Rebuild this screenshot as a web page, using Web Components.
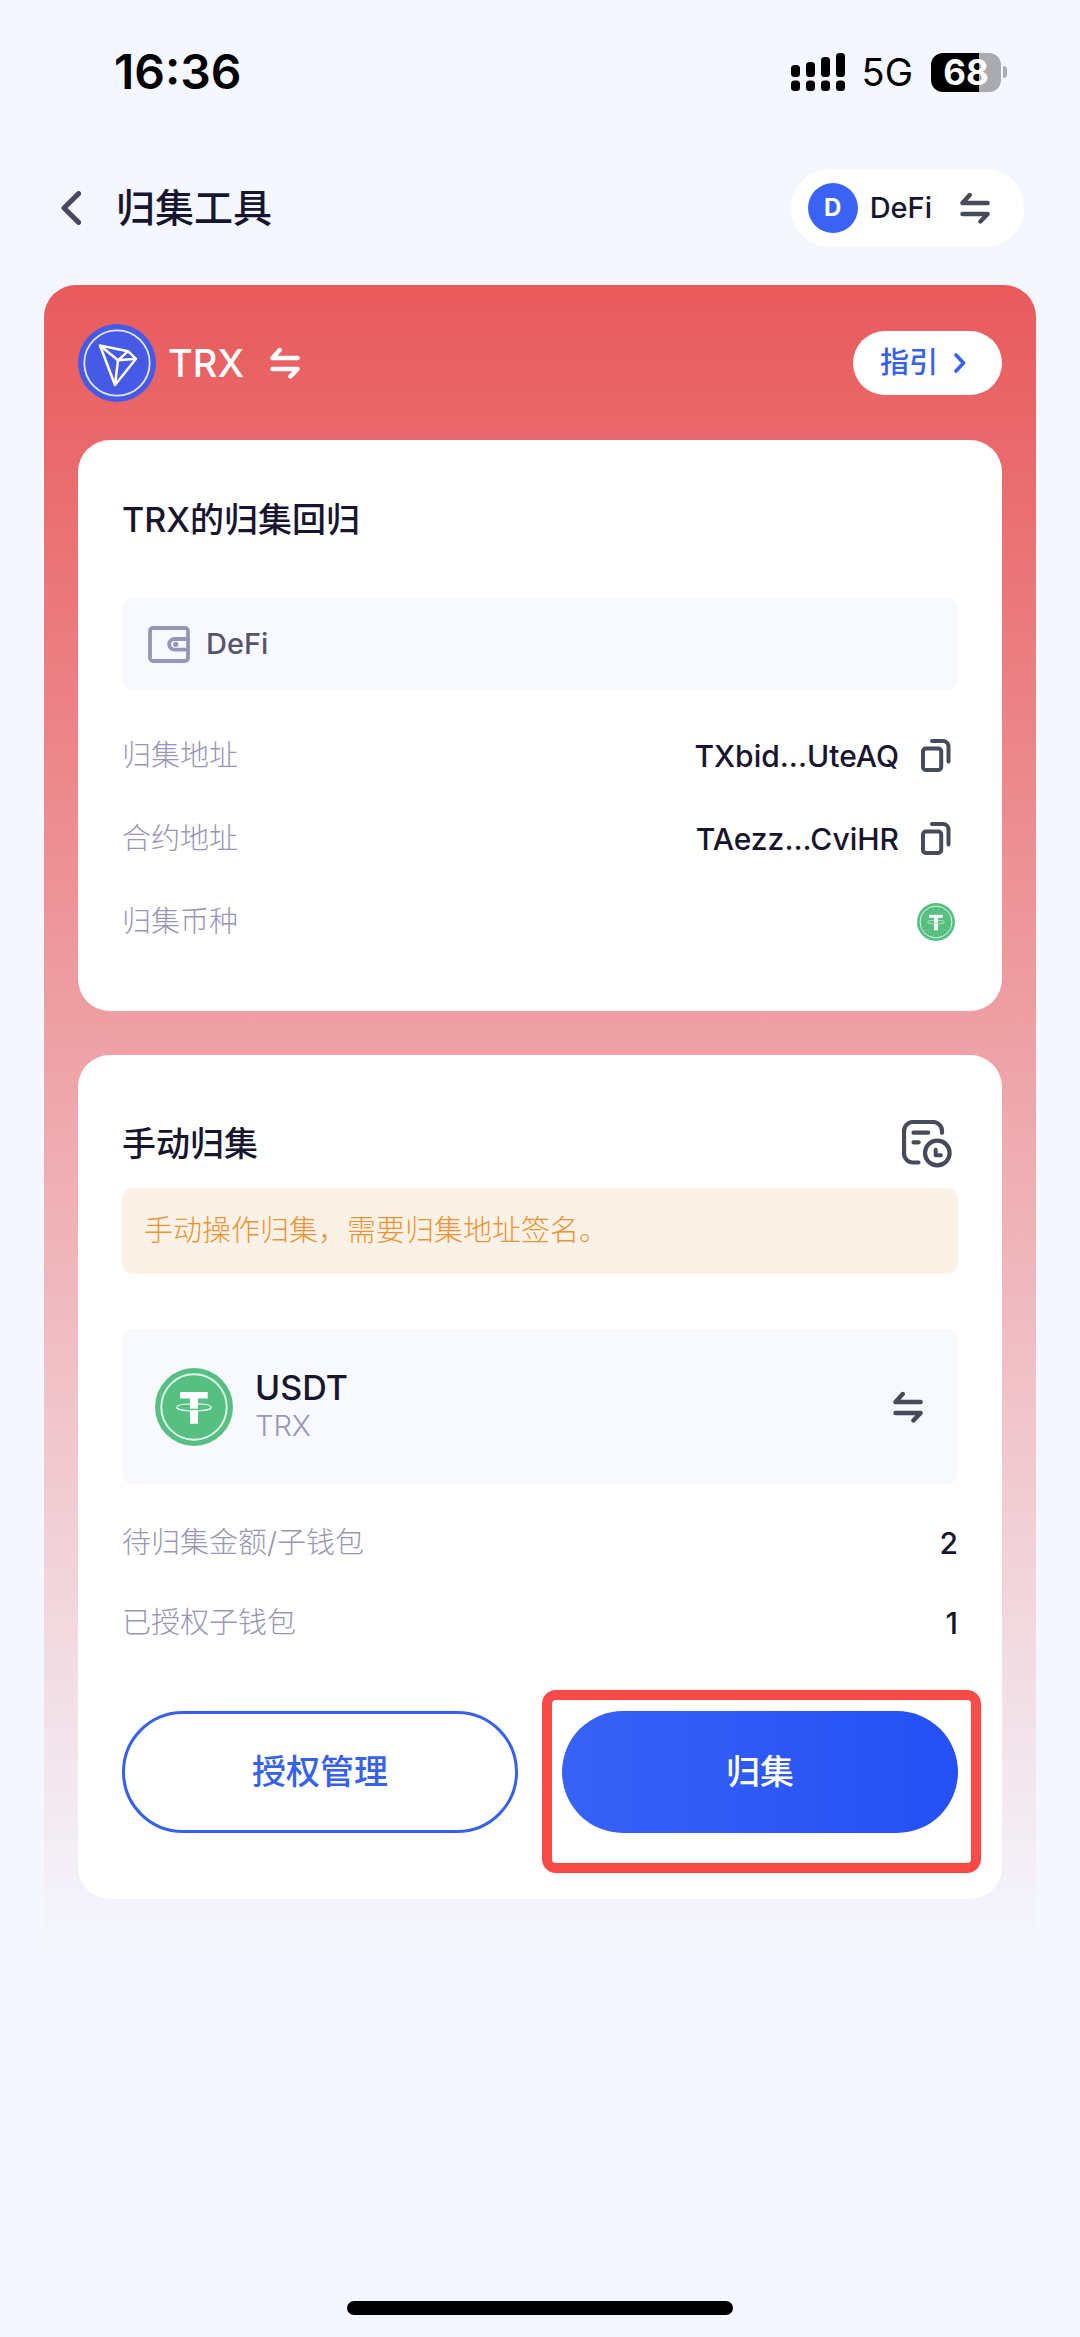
<!DOCTYPE html>
<html lang="zh-CN">
<head>
<meta charset="utf-8">
<meta name="viewport" content="width=device-width, initial-scale=1">
<title>归集工具</title>
<style>
  :root {
    --bg: #f4f7ff;
    --ink: #17152f;
    --ink-soft: #56546f;
    --muted: #9896b8;
    --icon: #464a5a;
    --blue: #3560f0;
    --field: #f7f9fe;
  }
  body {
    margin: 0;
    background: var(--bg);
    color: var(--ink);
    font-family: Inter, "Noto Sans CJK SC", sans-serif;
    font-size: 29px;
    line-height: 40px;
  }
</style>
</head>
<body>
<wallet-app></wallet-app>

<script>
const define = (name, html, setup) => {
  const template = document.createElement('template');
  template.innerHTML = `<style>
    *, *::before, *::after { box-sizing: border-box; }
    button { font: inherit; color: inherit; border: 0; margin: 0; padding: 0; background: none; cursor: pointer; }
    h1, h2, p { margin: 0; }
    </style>${html}`;
  customElements.define(name, class extends HTMLElement {
    constructor() {
      super();
      this.attachShadow({ mode: 'open' }).append(template.content.cloneNode(true));
    }
    connectedCallback() { if (setup) setup(this, this.shadowRoot); }
  });
};

/* Stroke icons: [width, height, markup] */
const ICONS = {
  back: [20, 34, '<path d="M17.600 2.600 3 17l14.600 14.400" stroke-width="5"/>'],
  next: [12, 20, '<path d="M2 2l7.500 8L2 18" stroke-width="3.600"/>'],
  swap: [30, 32, '<path d="M9.700 3 2.500 11H27.600M2.500 22H27.600L20.400 29.500" stroke-width="4.400"/>'],
  copy: [30, 33, '<rect x="2" y="9.500" width="18.200" height="21.500" rx="2.800" stroke-width="4"/><path d="M11 2h11a5.500 5.500 0 0 1 5.500 5.500V22.500" stroke-width="4"/>'],
  wallet: [42, 37, '<rect x="2" y="2" width="38" height="33" rx="3" stroke-width="3.800"/><path d="M40 13H26.500a5.200 5.200 0 0 0 0 10.600H40" stroke-width="3.800"/><circle cx="27.700" cy="18.300" r="2.600" fill="currentColor" stroke="none"/>'],
  history: [50, 48, '<path d="M40 12.800V11a9 9 0 0 0-9-9H11a9 9 0 0 0-9 9v22.500a9 9 0 0 0 9 9h5.500M11.500 12.700H26.200M11.500 22.300H16.700" stroke-width="4.200"/><circle cx="35.300" cy="33" r="12.300" stroke-width="4.200"/><path d="M33.700 29.800v5.500h5.200" stroke-width="4"/>']
};

define('line-icon', `<style>
  :host { display: inline-flex; flex: none; }
  svg { display: block; fill: none; stroke: currentColor; stroke-linecap: round; stroke-linejoin: round; }
</style><span></span>`, (el, root) => {
  const [w, h, body] = ICONS[el.getAttribute('name')];
  root.querySelector('span').innerHTML = `<svg width="${w}" height="${h}" viewBox="0 0 ${w} ${h}" aria-hidden="true">${body}</svg>`;
});

const COINS = {
  trx: `<circle cx="39" cy="39" r="39" fill="#465ae6"/>
    <circle cx="39" cy="39" r="32.700" fill="none" stroke="#e3e8ff" stroke-width="1.800"/>
    <g fill="none" stroke="#fff" stroke-width="2.500" stroke-linejoin="round">
    <path d="M22 21.500 50 27.200 58 34.800 37 61Z"/><path d="M22 21.500 40 36.300 50 27.200M40 36.300 58 34.800M40 36.300 37 61"/></g>`,
  usdt: `<circle cx="39" cy="39" r="39" fill="#57bf82"/>
    <circle cx="39" cy="39" r="32.700" fill="none" stroke="#dff9e9" stroke-width="1.900"/>
    <path d="M25 24H52.700V30.500H43V55.700H35V30.500H25Z" fill="#fff"/>
    <path d="M35 41.400H43" stroke="#57bf82" stroke-width="1.400"/>
    <path d="M35 35.800C27 36 21.800 37.400 21.800 39.200c0 2.100 7.600 3.700 17.200 3.700s17.200-1.600 17.200-3.700c0-1.800-5.200-3.200-13.200-3.400" fill="none" stroke="#e6fbef" stroke-width="1.300"/>`
};

define('coin-logo', `<style>
  :host { display: block; flex: none; width: 78px; height: 78px; }
  :host([small]) { width: 38px; height: 38px; }
  svg { display: block; width: 100%; height: 100%; }
</style><svg viewBox="0 0 78 78" aria-hidden="true"></svg>`, (el, root) => {
  root.querySelector('svg').innerHTML = COINS[el.getAttribute('coin')];
});

define('status-bar', `<style>
  :host { display: flex; align-items: center; justify-content: space-between; height: 144px; padding: 0 73px 0 114px; color: #000; }
  time { font-size: 48px; font-weight: 600; }
  .right { display: flex; align-items: center; }
  .signal { display: block; margin-right: 17px; }
  .net { font-size: 38px; margin-right: 18px; }
  .battery { display: flex; align-items: center; gap: 2px; }
  .level { width: 70px; height: 39px; border-radius: 12px; background: linear-gradient(90deg, #000 68%, #a9abb0 68%); color: #fff; font-size: 35px; font-weight: 700; line-height: 39px; text-align: center; }
  .nub { width: 4px; height: 12px; border-radius: 0 4px 4px 0; background: #a9abb0; }
</style>
<time>16:36</time>
<div class="right">
  <svg class="signal" width="54" height="38" viewBox="0 0 54 38" aria-hidden="true">
    <rect y="12" width="9" height="12" rx="3.500"/><rect x="15" y="9" width="9" height="15" rx="3.500"/><rect x="30" y="4" width="9" height="20" rx="3.500"/><rect x="45" width="9" height="24" rx="3.500"/>
    <rect y="27.500" width="9" height="10.500" rx="3.500"/><rect x="15" y="27.500" width="9" height="10.500" rx="3.500"/><rect x="30" y="27.500" width="9" height="10.500" rx="3.500"/><rect x="45" y="27.500" width="9" height="10.500" rx="3.500"/>
  </svg>
  <span class="net">5G</span>
  <div class="battery"><div class="level">68</div><div class="nub"></div></div>
</div>`);

define('page-header', `<style>
  :host { display: flex; align-items: center; height: 128px; padding: 0 56px 0 44px; }
  .back { display: flex; justify-content: center; width: 54px; padding: 12px 0; margin-right: 18px; color: var(--icon); }
  h1 { flex: 1; font-size: 39px; line-height: 56px; font-weight: 500; }
  .account { display: flex; align-items: center; height: 78px; padding: 0 34px 0 17px; border-radius: 39px; background: #fff; font-weight: 500; }
  .avatar { width: 50px; height: 50px; margin-right: 12px; border-radius: 50%; background: #3a62f5; color: #fff; font-size: 24px; line-height: 50px; font-weight: 700; }
  line-icon { color: var(--icon); }
  .account line-icon { margin-left: 28px; }
</style>
<button class="back" aria-label="返回"><line-icon name="back"></line-icon></button>
<h1><slot></slot></h1>
<button class="account"><span class="avatar">D</span><span>DeFi</span><line-icon name="swap"></line-icon></button>`);

define('chain-panel', `<style>
  :host { display: block; margin: 13px 44px 0; padding: 0 34px 51px; border-radius: 32px 32px 0 0; background: linear-gradient(#e95a5c, var(--bg)); }
  header { display: flex; align-items: center; justify-content: space-between; height: 155px; color: #fff; }
  .chain { display: flex; align-items: center; font-size: 38px; font-weight: 500; }
  .chain span { margin: 0 26px 0 12px; }
  .guide { display: flex; align-items: center; gap: 16px; height: 64px; padding: 0 36px 0 27px; border-radius: 32px; background: #fff; color: var(--blue); font-weight: 500; }
  .cards { display: flex; flex-direction: column; gap: 44px; }
</style>
<header>
  <button class="chain"><coin-logo coin="trx"></coin-logo><span>TRX</span><line-icon name="swap"></line-icon></button>
  <button class="guide">指引<line-icon name="next"></line-icon></button>
</header>
<div class="cards"><slot></slot></div>`);

define('section-card', `<style>
  :host { display: block; padding: 44px 44px 48px; border-radius: 32px; background: #fff; }
  header { display: flex; align-items: center; justify-content: space-between; min-height: 72px; }
  h2 { font-size: 34px; line-height: 48px; font-weight: 500; }
</style>
<header><h2><slot name="title"></slot></h2><slot name="action"></slot></header>
<slot></slot>`);

define('wallet-field', `<style>
  :host { display: flex; align-items: center; gap: 16px; height: 92px; margin: 42px 0 24px; padding: 0 26px; border-radius: 11px; background: var(--field); color: var(--ink-soft); font-weight: 500; }
  line-icon { color: var(--muted); }
</style>
<line-icon name="wallet"></line-icon><span><slot></slot></span>`);

define('info-row', `<style>
  :host { display: flex; align-items: center; justify-content: space-between; height: 83px; }
  :host([compact]) { height: 80px; }
  .label { color: var(--muted); font-weight: 300; }
  .value { display: flex; align-items: center; gap: 15px; font-size: 30px; font-weight: 500; }
  .end { display: none; justify-content: center; width: 44px; color: var(--icon); }
  :host([copy]) .end { display: flex; }
</style>
<span class="label"></span>
<span class="value"><slot></slot><button class="end" aria-label="复制"><line-icon name="copy"></line-icon></button></span>`, (el, root) => {
  root.querySelector('.label').textContent = el.getAttribute('label');
});

define('notice-bar', `<style>
  :host { display: block; padding: 23px 22px; border-radius: 11px; background: #fbf2e7; color: #ee9235; font-weight: 300; }
</style><p><slot></slot></p>`);

define('token-field', `<style>
  :host { display: block; margin: 55px 0 19px; }
  button { display: flex; align-items: center; width: 100%; height: 155px; padding: 0 35px 0 33px; border-radius: 11px; background: var(--field); text-align: left; }
  .text { display: flex; flex-direction: column; flex: 1; margin-left: 22px; }
  .name { font-size: 34px; font-weight: 500; line-height: 38px; }
  .net { line-height: 38px; color: var(--muted); font-weight: 300; }
  line-icon { color: var(--icon); }
</style>
<button><coin-logo coin="usdt"></coin-logo><span class="text"><span class="name">USDT</span><span class="net">TRX</span></span><line-icon name="swap"></line-icon></button>`);

define('pill-button', `<style>
  :host { display: block; flex: 1; }
  button { width: 100%; height: 122px; border: 3px solid var(--blue); border-radius: 61px; color: var(--blue); font-size: 34px; font-weight: 500; }
  :host([primary]) button { border: 0; background: linear-gradient(90deg, #3762f6, #2450f5); color: #fff; }
</style><button><slot></slot></button>`);

/* Frame laid over the action that the reader should tap */
define('tap-highlight', `<style>
  :host { display: flex; flex: 1; position: relative; }
  .frame { position: absolute; inset: -21px -23px -40px -20px; border: 10px solid #f84b47; border-radius: 14px; pointer-events: none; }
</style><slot></slot><div class="frame"></div>`);

define('wallet-app', `<style>
  :host { display: flex; flex-direction: column; min-height: 100vh; }
  main { flex: 1; }
  .manual { padding-bottom: 66px; }
  .history { display: flex; padding: 21px 6px 20px; color: var(--icon); }
  .coin { display: flex; justify-content: center; width: 44px; }
  .actions { display: flex; gap: 44px; margin-top: 48px; }
  .home { width: 386px; height: 14px; margin: 0 auto 22px; border-radius: 7px; background: #000; }
</style>
<status-bar></status-bar>
<page-header>归集工具</page-header>
<main>
  <chain-panel>
    <section-card>
      <span slot="title">TRX的归集回归</span>
      <wallet-field>DeFi</wallet-field>
      <info-row label="归集地址" copy>TXbid...UteAQ</info-row>
      <info-row label="合约地址" copy>TAezz...CviHR</info-row>
      <info-row label="归集币种"><span class="coin"><coin-logo coin="usdt" small></coin-logo></span></info-row>
    </section-card>
    <section-card class="manual">
      <span slot="title">手动归集</span>
      <button slot="action" class="history" aria-label="归集记录"><line-icon name="history"></line-icon></button>
      <notice-bar>手动操作归集，需要归集地址签名。</notice-bar>
      <token-field></token-field>
      <info-row label="待归集金额/子钱包" compact>2</info-row>
      <info-row label="已授权子钱包" compact>1</info-row>
      <div class="actions">
        <pill-button>授权管理</pill-button>
        <tap-highlight><pill-button primary>归集</pill-button></tap-highlight>
      </div>
    </section-card>
  </chain-panel>
</main>
<div class="home"></div>`);
</script>
</body>
</html>
